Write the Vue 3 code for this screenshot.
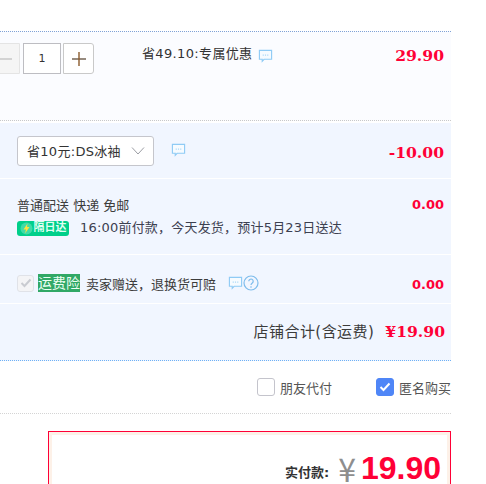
<template>
  <div class="page">
    <div class="order">
      <div class="item-row">
        <div class="stepper">
          <button class="step minus">
            <svg width="14" height="14" viewBox="0 0 14 14"><path d="M0 7h14" stroke="#c4c4c4" stroke-width="1.4" /></svg>
          </button>
          <div class="qty">1</div>
          <button class="step plus">
            <svg width="14" height="14" viewBox="0 0 14 14"><path d="M0 7h14" stroke="#6b5a48" stroke-width="1.4" /><path d="M7 0v14" stroke="#8a5a2c" stroke-width="1.4" /></svg>
          </button>
        </div>
        <div class="promo">
          <span>省49.10:专属优惠</span>
          <svg class="bubble small" viewBox="0 0 16 14"><path d="M1.500 1h13v9.500h-8l-2 2.200v-2.200h-3z" /><path class="dots" d="M5 6h1.200M7.400 6h1.200M9.800 6h1.200" /></svg>
        </div>
        <div class="price serif">29.90</div>
      </div>

      <div class="coupon-row">
        <div class="select">
          <span>省10元:DS冰袖</span>
          <svg width="14" height="8" viewBox="0 0 14 8"><path d="M1 .5l6 6.500 6-6.500" fill="none" stroke="#9a9ca3" stroke-width="1" /></svg>
        </div>
        <svg class="bubble" viewBox="0 0 16 14"><path d="M1.500 1h13v9.500h-8l-2 2.200v-2.200h-3z" /><path class="dots" d="M5 6h1.200M7.400 6h1.200M9.800 6h1.200" /></svg>
        <div class="price serif">-10.00</div>
      </div>

      <div class="ship-row">
        <div class="ship-info">
          <div class="ship-name">普通配送 快递 免邮</div>
          <div class="ship-time">
            <span class="next-day">
              <svg width="13" height="13" viewBox="0 0 13 13"><circle cx="6.500" cy="6.500" r="6" fill="#fff" opacity=".25" /><path d="M7.500 1.500L3.500 7.500h2.500l-1 4 4.500-6.500h-2.500z" fill="#ffe23c" /></svg>
              隔日达
            </span>
            <span>16:00前付款，今天发货，预计5月23日送达</span>
          </div>
        </div>
        <div class="price sans">0.00</div>
      </div>

      <div class="insure-row">
        <span class="check-off">
          <svg width="12" height="10" viewBox="0 0 12 10"><path d="M1.500 5l3 3 6-6.500" fill="none" stroke="#c9cbd1" stroke-width="2" /></svg>
        </span>
        <span class="tag">运费险</span>
        <span class="insure-text">卖家赠送，退换货可赔</span>
        <svg class="bubble" viewBox="0 0 16 14"><path d="M1.500 1h13v9.500h-8l-2 2.200v-2.200h-3z" /><path class="dots" d="M5 6h1.200M7.400 6h1.200M9.800 6h1.200" /></svg>
        <svg class="help" viewBox="0 0 16 16"><circle cx="8" cy="8" r="7" fill="none" stroke="#7dbcec" stroke-width="1.200" /><path d="M5.800 6.300a2.200 2.200 0 1 1 3.500 1.700c-.8.600-1.300 1-1.300 2" fill="none" stroke="#7dbcec" stroke-width="1.200" /><circle cx="8" cy="12" r=".8" fill="#7dbcec" /></svg>
        <div class="price sans">0.00</div>
      </div>

      <div class="total-row">
        <span class="total-label">店铺合计(含运费)</span>
        <span class="total serif">¥19.90</span>
      </div>
    </div>

    <div class="options">
      <label class="opt">
        <span class="box"></span>
        朋友代付
      </label>
      <label class="opt">
        <span class="box on">
          <svg width="12" height="10" viewBox="0 0 12 10"><path d="M1.500 5l3 3 6-6.500" fill="none" stroke="#fff" stroke-width="2" /></svg>
        </span>
        匿名购买
      </label>
    </div>

    <div class="pay-wrap">
      <div class="pay-box">
        <div class="pay-inner">
          <span class="pay-label">实付款:</span>
          <span class="yen">¥</span>
          <span class="pay-num">19.90</span>
        </div>
      </div>
    </div>
  </div>
</template>

<script setup>
</script>

<style>
html, body {
  margin: 0;
  overflow: hidden;
  background: #fff;
}
</style>

<style scoped>
.page {
  width: 451px;
  height: 484px;
  overflow: hidden;
  padding-top: 31px;
  box-sizing: border-box;
  font-family: "DejaVu Sans", "Noto Sans CJK SC", sans-serif;
  font-size: 13px;
  color: #3c3c3c;
}

.order {
  display: flex;
  flex-direction: column;
}

.price {
  margin-left: auto;
  margin-right: 7px;
  color: #ff0036;
  font-weight: 700;
}

.serif {
  font-family: "DejaVu Serif", "Noto Sans CJK SC", serif;
  font-size: 15.600px;
}

.sans {
  font-size: 13px;
}

.item-row {
  height: 88px;
  display: flex;
  align-items: flex-start;
  background: #fbfcff;
  border-top: 1px dotted #80a2d6;
  border-bottom: 1px dotted #c9c9c9;
}

.stepper {
  display: flex;
  gap: 2px;
  margin: 11px 0 0 -11px;
}

.step {
  width: 31px;
  height: 31px;
  padding: 0;
  display: flex;
  align-items: center;
  justify-content: center;
  background: #fff;
  border: 1px solid #c9c9c9;
  border-radius: 0 3px 3px 0;
}

.minus {
  background: #f5f5f5;
  border-color: #e4e4e4;
  border-radius: 3px 0 0 3px;
  margin-right: 1px;
}

.qty {
  width: 36px;
  height: 29px;
  line-height: 29px;
  text-align: center;
  font-size: 11px;
  color: #333;
  background: #fff;
  border: 1px solid #bdbdc2;
}

.promo {
  margin: 10px 0 0 48px;
  display: flex;
  align-items: center;
  gap: 6px;
  color: #333;
  letter-spacing: .35px;
}

.item-row .price {
  margin-top: 14px;
}

.bubble {
  width: 15px;
  height: 14px;
  flex: none;
  fill: #f6fbff;
  stroke: #8fcbf5;
  stroke-width: 1.200;
}

.bubble .dots {
  fill: none;
  stroke: #a9d8f7;
}

.small {
  margin-top: 7px;
}

.coupon-row {
  margin-top: 2px;
  height: 55px;
  display: flex;
  align-items: center;
  background: #f1f6ff;
  border-bottom: 1px solid #fff;
}

.coupon-row .price {
  margin-top: 3px;
}

.select {
  margin-left: 17px;
  width: 137px;
  height: 30px;
  padding: 0 8px 0 9px;
  box-sizing: border-box;
  display: flex;
  align-items: center;
  justify-content: space-between;
  background: #fff;
  border: 1px solid #c5c6cc;
  border-radius: 3px;
  color: #333;
  letter-spacing: .3px;
}

.coupon-row .bubble {
  margin: 0 0 2px 17px;
}

.ship-row {
  height: 75px;
  display: flex;
  align-items: flex-start;
  background: #f1f6ff;
  border-bottom: 1px solid #fff;
}

.ship-info {
  margin: 18px 0 0 17px;
}

.ship-name {
  line-height: 17px;
  color: #3c3c3c;
}

.ship-time {
  margin-top: 6px;
  display: flex;
  align-items: center;
  gap: 11px;
  line-height: 16px;
  letter-spacing: .2px;
  color: #3c4050;
}

.next-day {
  width: 52px;
  height: 15px;
  display: flex;
  align-items: center;
  justify-content: center;
  gap: 1px;
  border-radius: 3px;
  background: #00cf8a;
  color: #dffff2;
  font-size: 11px;
  font-weight: 700;
  letter-spacing: 0;
}

.ship-row .price {
  margin-top: 18px;
}

.insure-row {
  padding-top: 8px;
  height: 40px;
  display: flex;
  align-items: center;
  background: #f1f6ff;
  border-bottom: 1px solid #fff;
}

.insure-row .price {
  margin-top: 2px;
}

.check-off {
  width: 15px;
  height: 15px;
  margin-left: 17px;
  display: flex;
  align-items: center;
  justify-content: center;
  background: #f4f4f6;
  border: 1px solid #e0e2e8;
  border-radius: 3px;
}

.tag {
  margin-left: 4px;
  height: 18px;
  line-height: 18px;
  background: #31a866;
  color: #eafff3;
  font-size: 14px;
}

.insure-text {
  margin-left: 6px;
}

.insure-row .bubble {
  margin-left: 12px;
}

.help {
  width: 16px;
  height: 16px;
}

.total-row {
  height: 57px;
  padding: 18px 6px 0 0;
  box-sizing: border-box;
  display: flex;
  justify-content: flex-end;
  align-items: flex-start;
  gap: 11px;
  background: #f1f6ff;
  border-bottom: 1px dotted #6fb1f5;
  font-size: 15px;
  line-height: 20px;
}

.total-label {
  letter-spacing: .45px;
}

.total {
  color: #ff0036;
  font-weight: 700;
}

.options {
  height: 52px;
  display: flex;
  justify-content: flex-end;
  align-items: center;
  gap: 44px;
  border-bottom: 1px dotted #d4d4d4;
  color: #555;
}

.opt {
  display: flex;
  align-items: center;
  gap: 5px;
}

.box {
  width: 16px;
  height: 16px;
  display: flex;
  align-items: center;
  justify-content: center;
  background: #fff;
  border: 1px solid #c4c4cc;
  border-radius: 3px;
}

.on {
  background: #4f86f7;
  border-color: #4f86f7;
}

.pay-wrap {
  padding: 17px 0 0 48px;
}

.pay-box {
  height: 80px;
  border: 1px solid #ff0036;
  background: #fff;
}

.pay-inner {
  height: 100%;
  box-sizing: border-box;
  border: solid #fdf1e8;
  border-width: 3px 3px 0;
  padding: 17px 6px 0 0;
  display: flex;
  justify-content: flex-end;
  align-items: flex-start;
}

.pay-label {
  font-size: 13px;
  font-weight: 700;
  line-height: 16px;
  color: #333;
  margin: 13px 9px 0 0;
}

.yen {
  font-size: 32px;
  line-height: 32px;
  color: #8e8e8e;
  font-family: "Noto Sans CJK SC", sans-serif;
  margin-right: 5px;
}

.pay-num {
  font-family: "Liberation Sans", sans-serif;
  font-size: 32px;
  line-height: 32px;
  font-weight: 700;
  color: #ff0036;
}
</style>
